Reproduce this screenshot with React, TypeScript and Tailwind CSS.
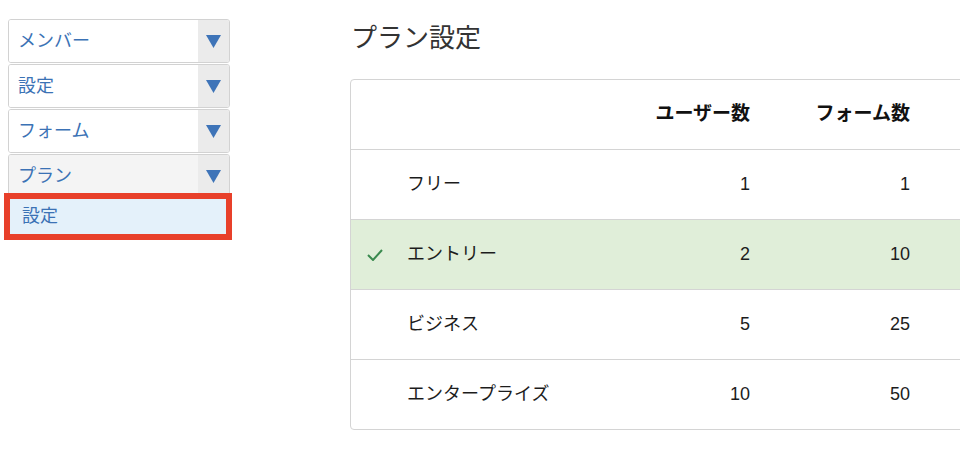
import React from "react";

const font = { fontFamily: '"Liberation Sans", "Noto Sans CJK JP", sans-serif' };

function Triangle() {
  return (
    <svg width="15" height="13" viewBox="0 0 15 13">
      <polygon points="0,0 15,0 7.5,13" fill="#3e74b8" />
    </svg>
  );
}

function MenuItem({ label, active }: { label: string; active?: boolean }) {
  return (
    <div className="flex h-[44px] w-[222px] overflow-hidden rounded-[3px] border border-[#d2d2d2]">
      <div
        className={`flex flex-1 items-center pl-[9px] text-[18px] text-[#3b72b5] ${
          active ? "bg-[#f4f4f4]" : "bg-white"
        }`}
      >
        {label}
      </div>
      <div className="flex w-[31px] items-center justify-center bg-[#ebebeb]">
        <Triangle />
      </div>
    </div>
  );
}

function Check() {
  return (
    <svg width="16" height="12" viewBox="0 0 16 12">
      <polyline points="1,6 6,11 15,1" fill="none" stroke="#3a8a4f" strokeWidth="2" />
    </svg>
  );
}

const rows = [
  { name: "フリー", users: "1", forms: "1" },
  { name: "エントリー", users: "2", forms: "10", current: true },
  { name: "ビジネス", users: "5", forms: "25" },
  { name: "エンタープライズ", users: "10", forms: "50" },
];

export default function App() {
  return (
    <div className="flex h-[451px] w-[960px] overflow-hidden bg-white" style={font}>
      <div className="flex w-[240px] shrink-0 flex-col pl-[8px] pt-[19px]">
        <div className="flex flex-col gap-[1px]">
          <MenuItem label="メンバー" />
          <MenuItem label="設定" />
          <MenuItem label="フォーム" />
          <MenuItem label="プラン" active />
        </div>
        <div className="-ml-[4px] -mt-[5px] flex h-[47px] w-[228px] items-center border-[6px] border-[#e8402a] bg-[#e4f1fa] pl-[12px] text-[18px] text-[#3b72b5]">
          設定
        </div>
      </div>
      <div className="ml-[110px] flex shrink-0 flex-col pt-[22px]">
        <h1 className="h-[32px] pl-[1px] text-[26px] leading-[32px] text-[#333]">プラン設定</h1>
        <div className="mt-[25px] w-[640px] rounded-[4px] border border-[#d4d4d4]">
          <div className="flex h-[70px] items-center border-b border-[#d4d4d4] text-[19px] font-bold text-[#111]">
            <div className="w-[56px]" />
            <div className="w-[240px]" />
            <div className="w-[103px] text-right">ユーザー数</div>
            <div className="w-[160px] text-right">フォーム数</div>
            <div className="flex-1" />
          </div>
          {rows.map((r, i) => (
            <div
              key={r.name}
              className={`flex items-center text-[18px] text-[#1c1c1c] ${
                i < rows.length - 1 ? "h-[70px] border-b border-[#d4d4d4]" : "h-[69px]"
              } ${r.current ? "bg-[#e0eed9]" : ""}`}
            >
              <div className="flex w-[56px] items-center pl-[16px]">{r.current ? <Check /> : null}</div>
              <div className="w-[240px]">{r.name}</div>
              <div className="w-[103px] text-right">{r.users}</div>
              <div className="w-[160px] text-right">{r.forms}</div>
              <div className="flex-1" />
            </div>
          ))}
        </div>
      </div>
    </div>
  );
}
